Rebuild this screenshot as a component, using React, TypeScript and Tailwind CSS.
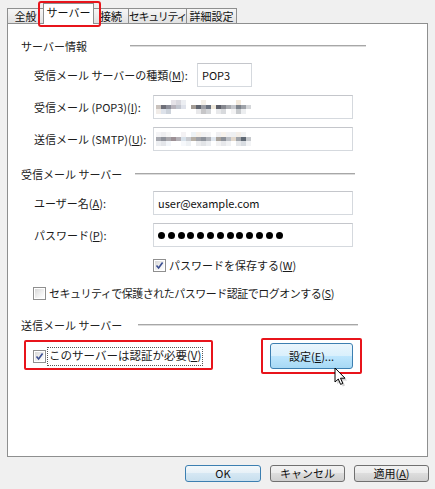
import React from "react";

const font = "font-['Noto_Sans_CJK_JP','Noto_Sans',sans-serif]";

const mosaicA = [
  ["#fff", "#fff", "#fff", "#e6e3e8", "#d9d8de", "#eceef2", "#fff", "#fff", "#fff", "#f3efe8", "#fff", "#fff", "#fff", "#fff", "#fff", "#fff", "#f2e9dc", "#fff", "#fff"],
  ["#c9c2bd", "#6e6f78", "#8d8f9a", "#b8b4bc", "#c2c6cf", "#dfe2ea", "#fff", "#a39c95", "#5f646f", "#9a9ca3", "#6a7280", "#efe8da", "#5c5e68", "#86888f", "#a7a9ae", "#c3c5ca", "#7d838c", "#9fa3a9", "#d5d7da"],
  ["#f1ece8", "#dde2ea", "#ccd2da", "#fff", "#fff", "#fff", "#fff", "#fff", "#e8e8ea", "#c6c6c8", "#d4d6d9", "#fff", "#e8e9eb", "#d8dadd", "#fff", "#f3f3f4", "#c7cacd", "#eceef0", "#fff"],
];

const mosaicB = [
  ["#f4f4f6", "#eeeef0", "#f6f6f6", "#fff", "#fff", "#f4f2f4", "#fff", "#eef3f6", "#f6f1ea", "#f2f2f3", "#f5f5f6", "#fff", "#f0f0f2", "#f7f2ec", "#f1f1f3", "#eef0f2", "#f3eee8", "#f1f2f3", "#fff"],
  ["#a7a9b0", "#8f929a", "#a9a7ab", "#9c9095", "#b4b0b6", "#d7e1ea", "#c9cbd0", "#b7b0a6", "#9fa1a7", "#8e939b", "#b0b3b9", "#dfe6ee", "#a9a39c", "#8d9199", "#bcbfc5", "#e2d8cc", "#9fa3a9", "#5f6873", "#c7cace"],
  ["#eceef1", "#e4e6ea", "#f3f6fa", "#fff", "#fff", "#f6f8fb", "#eef1f4", "#fff", "#ebecee", "#e2e4e7", "#eceef1", "#fff", "#f2f2f3", "#e7e8eb", "#f1f2f4", "#fff", "#e6e8eb", "#d9dde2", "#f3f4f6"],
];

function Mosaic({ rows }: { rows: string[][] }) {
  return (
    <div className="flex flex-col">
      {rows.map((row, i) => (
        <div key={i} className="flex">
          {row.map((c, j) => (
            <div key={j} className="w-[5px] h-[4.5px]" style={{ backgroundColor: c }} />
          ))}
        </div>
      ))}
    </div>
  );
}

function Checkbox({ checked }: { checked?: boolean }) {
  return (
    <div className="w-[13px] h-[13px] shrink-0 border border-[#8f8f8f] bg-white p-[1px]">
      <div className="w-full h-full bg-[linear-gradient(135deg,#d8d8d8_0%,#f2f2f2_60%,#ffffff_100%)] flex items-center justify-center">
        {checked && (
          <svg width="9" height="9" viewBox="0 0 9 9">
            <path d="M1.5 4.5 L3.6 7 L7.6 1.5" fill="none" stroke="#3b4f92" strokeWidth="1.6" />
          </svg>
        )}
      </div>
    </div>
  );
}

function Input({ width, children }: { width: string; children?: React.ReactNode }) {
  return (
    <div className={`${width} h-[24px] shrink-0 border border-[#d5d9de] border-t-[#c4c6cb] bg-white flex items-center`}>
      {children}
    </div>
  );
}

function SectionHeader({ title, labelWidth, lineWidth }: { title: string; labelWidth: string; lineWidth: string }) {
  return (
    <div className="flex items-center h-[16px] pl-[13px]">
      <span className={`${labelWidth} shrink-0 text-[#222]`}>{title}</span>
      <div className={`${lineWidth} flex flex-col`}>
        <div className="h-px bg-[#a7a7a7]" />
        <div className="h-px bg-[#dcdcdc]" />
      </div>
    </div>
  );
}

function Tab({ label, width, selected, first, tight }: { label: string; width: string; selected?: boolean; first?: boolean; tight?: boolean }) {
  if (selected) {
    return (
      <div className={`${width} h-[21px] -ml-px -mb-px relative z-10 border border-b-0 border-[#8e8f8f] bg-white flex items-center justify-center pb-[3px] text-[#111] whitespace-nowrap`}>
        {label}
        <div className="absolute -left-[6px] -right-[8px] -top-[3px] -bottom-[3px] border-2 border-[#e8141b] rounded-[3px]" />
      </div>
    );
  }
  return (
    <div
      className={`${width} h-[15px] ${first ? "" : "-ml-px"} ${tight ? "tracking-[-1.3px]" : ""} border border-b-0 border-[#8e8f8f] bg-[linear-gradient(to_bottom,#f6f6f6_0%,#ececec_50%,#e1e1e1_100%)] flex items-center justify-center text-[#111] whitespace-nowrap overflow-hidden`}
    >
      {label}
    </div>
  );
}

function Button({ label, variant }: { label: React.ReactNode; variant?: "default" | "hover" }) {
  const skin =
    variant === "hover"
      ? "border-[#3c7fb1] bg-[linear-gradient(to_bottom,#eaf6fd_0%,#d9f0fc_50%,#bee6fd_50%,#a7d9f5_100%)]"
      : variant === "default"
      ? "border-[#3c7fb1] bg-[linear-gradient(to_bottom,#f3f8fb_0%,#e6f0f7_50%,#d5e7f3_50%,#c8dfee_100%)]"
      : "border-[#707070] bg-[linear-gradient(to_bottom,#f2f2f2_0%,#ebebeb_50%,#dddddd_50%,#cfcfcf_100%)]";
  return <div className={`w-full h-full border rounded-[3px] flex items-center justify-center text-[#111] ${skin}`}>{label}</div>;
}

export default function App() {
  return (
    <div className={`w-[435px] h-[489px] bg-[#f0f0f0] ${font} text-[11px] leading-none text-[#1b1b1b] overflow-hidden relative`}>
      {/* Tabs */}
      <div className="h-[23px] pl-[7px] flex items-end">
        <Tab label="全般" width="w-[37px]" first />
        <Tab label="サーバー" width="w-[51px]" selected />
        <Tab label="接続" width="w-[36px]" />
        <Tab label="セキュリティ" width="w-[59px]" tight />
        <Tab label="詳細設定" width="w-[51px]" />
      </div>

      {/* Panel */}
      <div className="ml-[7px] w-[421px] h-[434px] border border-[#8e8f8f] bg-white flex flex-col">
        <div className="mt-[14px]">
          <SectionHeader title="サーバー情報" labelWidth="w-[109px]" lineWidth="w-[236px]" />
        </div>

        <div className="mt-[9px] h-[24px] flex items-center">
          <span className="w-[189px] pl-[26px] shrink-0">
            受信メール サーバーの種類(<u>M</u>):
          </span>
          <Input width="w-[55px]">
            <span className="pl-[4px] text-[#111]">POP3</span>
          </Input>
        </div>

        <div className="mt-[8px] h-[24px] flex items-center">
          <span className="w-[145px] pl-[26px] shrink-0">
            受信メール (POP3)(<u>I</u>):
          </span>
          <Input width="w-[200px]">
            <div className="pl-[2px]">
              <Mosaic rows={mosaicA} />
            </div>
          </Input>
        </div>

        <div className="mt-[8px] h-[24px] flex items-center">
          <span className="w-[145px] pl-[26px] shrink-0">
            送信メール (SMTP)(<u>U</u>):
          </span>
          <Input width="w-[200px]">
            <div className="pl-[2px]">
              <Mosaic rows={mosaicB} />
            </div>
          </Input>
        </div>

        <div className="mt-[15px]">
          <SectionHeader title="受信メール サーバー" labelWidth="w-[114px]" lineWidth="w-[220px]" />
        </div>

        <div className="mt-[9px] h-[24px] flex items-center">
          <span className="w-[145px] pl-[26px] shrink-0">
            ユーザー名(<u>A</u>):
          </span>
          <Input width="w-[200px]">
            <span className="pl-[4px] text-[#111]">user@example.com</span>
          </Input>
        </div>

        <div className="mt-[8px] h-[24px] flex items-center">
          <span className="w-[145px] pl-[26px] shrink-0">
            パスワード(<u>P</u>):
          </span>
          <Input width="w-[200px]">
            <div className="pl-[4px] flex gap-[2.8px]">
              {Array.from({ length: 13 }).map((_, i) => (
                <div key={i} className="w-[7px] h-[7px] rounded-full bg-black" />
              ))}
            </div>
          </Input>
        </div>

        <div className="mt-[10px] h-[16px] flex items-center pl-[145px] gap-[3px]">
          <Checkbox checked />
          <span>
            パスワードを保存する(<u>W</u>)
          </span>
        </div>

        <div className="mt-[12px] h-[16px] flex items-center pl-[25px] gap-[3px]">
          <Checkbox />
          <span className="tracking-[-0.5px]">
            セキュリティで保護されたパスワード認証でログオンする(<u>S</u>)
          </span>
        </div>

        <div className="mt-[16px]">
          <SectionHeader title="送信メール サーバー" labelWidth="w-[117px]" lineWidth="w-[220px]" />
        </div>

        <div className="mt-[10px] h-[26px] flex items-center">
          <div className="ml-[25px] relative flex items-center gap-[1px]">
            <Checkbox checked />
            <span className="border border-dotted border-[#555] px-[1px] h-[19px] flex items-center text-[11.5px]">
              このサーバーは認証が必要(<u>V</u>)
            </span>
            <div className="absolute -left-[9px] -right-[10px] -top-[7px] -bottom-[4px] border-2 border-[#e8141b] rounded-[2px]" />
          </div>

          <div className="ml-auto mr-[74px] w-[83px] h-[26px] relative">
            <Button label={<span>設定(<u>E</u>)...</span>} variant="hover" />
            <div className="absolute -left-[9px] -right-[9px] -top-[5px] -bottom-[5px] border-2 border-[#e8141b] rounded-[2px]" />
            <svg className="absolute left-[64px] top-[24px] z-10" width="14" height="21" viewBox="0 0 14 21">
              <path d="M2 2 L2 16 L5.3 13 L7.6 18.4 L9.8 17.4 L7.5 12.2 L12 12.2 Z" fill="#000" opacity="0.18" transform="translate(1.2 1.2)" />
              <path d="M1 1 L1 15 L4.3 12 L6.6 17.4 L8.8 16.4 L6.5 11.2 L11 11.2 Z" fill="#fff" stroke="#000" strokeWidth="1" strokeLinejoin="round" />
            </svg>
          </div>
        </div>
      </div>

      {/* Dialog buttons */}
      <div className="mt-[8px] flex pl-[185px] gap-[9px]">
        <div className="w-[76px] h-[17px]">
          <Button label="OK" variant="default" />
        </div>
        <div className="w-[75px] h-[17px]">
          <Button label="キャンセル" />
        </div>
        <div className="w-[75px] h-[17px]">
          <Button label={<span>適用(<u>A</u>)</span>} />
        </div>
      </div>
    </div>
  );
}
